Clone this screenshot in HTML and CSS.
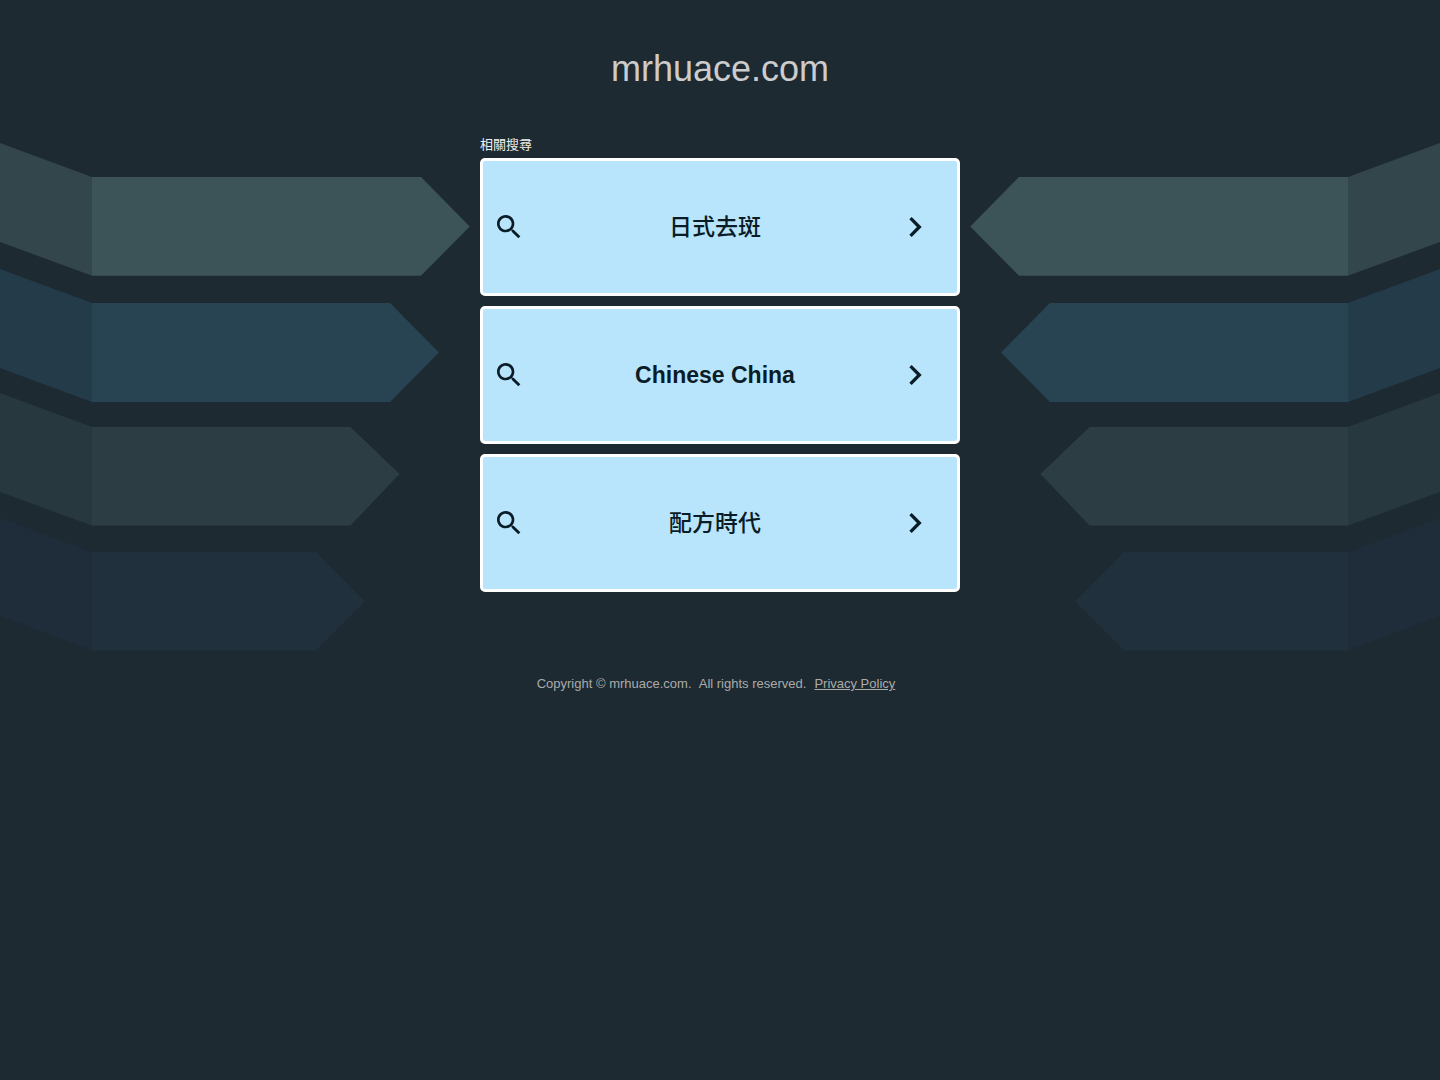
FILE: index.html
```
<!DOCTYPE html>
<html lang="zh-Hant">
<head>
  <meta charset="UTF-8">
  <meta name="viewport" content="width=device-width, initial-scale=1.0">
  <title>mrhuace.com</title>
  <link rel="stylesheet" href="styles.css">
</head>
<body>
  <svg class="symbols" aria-hidden="true">
    <symbol id="search" viewBox="0 0 24 24">
      <path d="M15.5 14h-.79l-.28-.27C15.41 12.59 16 11.11 16 9.5 16 5.91 13.09 3 9.5 3S3 5.91 3 9.5 5.91 16 9.5 16c1.61 0 3.09-.59 4.23-1.57l.27.28v.79l5 4.99L20.49 19l-4.99-5zm-6 0C7.01 14 5 11.99 5 9.5S7.01 5 9.5 5 14 7.01 14 9.5 11.99 14 9.5 14z"/>
    </symbol>
    <symbol id="chevron" viewBox="6 6 12 12">
      <path d="M10 6L8.59 7.41 13.17 12l-4.58 4.59L10 18l6-6z"/>
    </symbol>
    <symbol id="ribbons" viewBox="0 0 470 520">
      <path fill="#32464c" d="M0 3l92 34v98.700L0 102z"/>
      <path fill="#3c5357" d="M92 37h329l48.800 49.500L421 135.700H92z"/>
      <path fill="#243b49" d="M0 129l92 34v99L0 228z"/>
      <path fill="#284452" d="M92 163h298l49 49.500L390 262H92z"/>
      <path fill="#28383f" d="M0 253l92 34v98.500L0 352z"/>
      <path fill="#2c3d43" d="M92 287h258.500l49 47-49 51.500H92z"/>
      <path fill="#1f2d3a" d="M0 378l92 34v98.500L0 476z"/>
      <path fill="#20303c" d="M92 412h224l49 49.500-49 49H92z"/>
    </symbol>
  </svg>

  <svg class="ribbons" aria-hidden="true"><use href="#ribbons"/></svg>
  <svg class="ribbons ribbons-right" aria-hidden="true"><use href="#ribbons"/></svg>

  <header>
    <h1>mrhuace.com</h1>
  </header>

  <main>
    <h2>相關搜尋</h2>
    <nav class="links">
      <a class="card" href="#">
        <svg class="icon-search" aria-hidden="true"><use href="#search"/></svg>
        <span class="card-text">日式去斑</span>
        <svg class="icon-chevron" aria-hidden="true"><use href="#chevron"/></svg>
      </a>
      <a class="card" href="#">
        <svg class="icon-search" aria-hidden="true"><use href="#search"/></svg>
        <span class="card-text latin">Chinese China</span>
        <svg class="icon-chevron" aria-hidden="true"><use href="#chevron"/></svg>
      </a>
      <a class="card" href="#">
        <svg class="icon-search" aria-hidden="true"><use href="#search"/></svg>
        <span class="card-text">配方時代</span>
        <svg class="icon-chevron" aria-hidden="true"><use href="#chevron"/></svg>
      </a>
    </nav>
  </main>

  <footer>
    <span>Copyright © mrhuace.com. &nbsp;All rights reserved.</span>
    <a href="#">Privacy Policy</a>
  </footer>
</body>
</html>
```
FILE: styles.css
```
* {
  box-sizing: border-box;
}

body {
  position: relative;
  margin: 0;
  min-height: 100vh;
  overflow-x: hidden;
  background-color: #1e2a32;
  font-family: "Liberation Sans", Arial, "Noto Sans CJK TC", sans-serif;
}

.symbols {
  display: none;
}

/* decorative ribbons behind the content */
.ribbons {
  position: absolute;
  top: 140px;
  left: 0;
  z-index: -1;
  width: 470px;
  height: 520px;
}

.ribbons-right {
  left: auto;
  right: 0;
  transform: scaleX(-1);
}

header {
  padding: 48px 20px;
  text-align: center;
}

h1 {
  margin: 0;
  color: #ccc;
  font-size: 36px;
  font-weight: normal;
  line-height: 42px;
}

main {
  max-width: 480px;
  margin: 0 auto;
}

h2 {
  margin: 0;
  color: #eee;
  font-size: 13px;
  font-weight: normal;
  line-height: 14px;
  padding-bottom: 6px;
}

.links {
  display: flex;
  flex-direction: column;
  gap: 10px;
}

.card {
  display: flex;
  align-items: center;
  min-height: 138px;
  padding: 0 32px 0 10px;
  border: 3px solid #fff;
  border-radius: 5px;
  background-color: #b8e5fc;
  color: #0a1c26;
  text-decoration: none;
}

.card-text {
  flex: 1;
  font-size: 23px;
  font-weight: 500;
  line-height: 28px;
  text-align: center;
}

.latin {
  font-weight: bold;
}

.icon-search {
  width: 32px;
  height: 32px;
  fill: currentColor;
}

.icon-chevron {
  width: 20px;
  height: 20px;
  fill: currentColor;
}

footer {
  display: flex;
  flex-wrap: wrap;
  justify-content: center;
  align-items: baseline;
  gap: 8px;
  padding: 84px 8px 20px 0;
  color: #aaa;
  font-size: 13px;
  line-height: 16px;
}

footer a {
  color: inherit;
}
```
